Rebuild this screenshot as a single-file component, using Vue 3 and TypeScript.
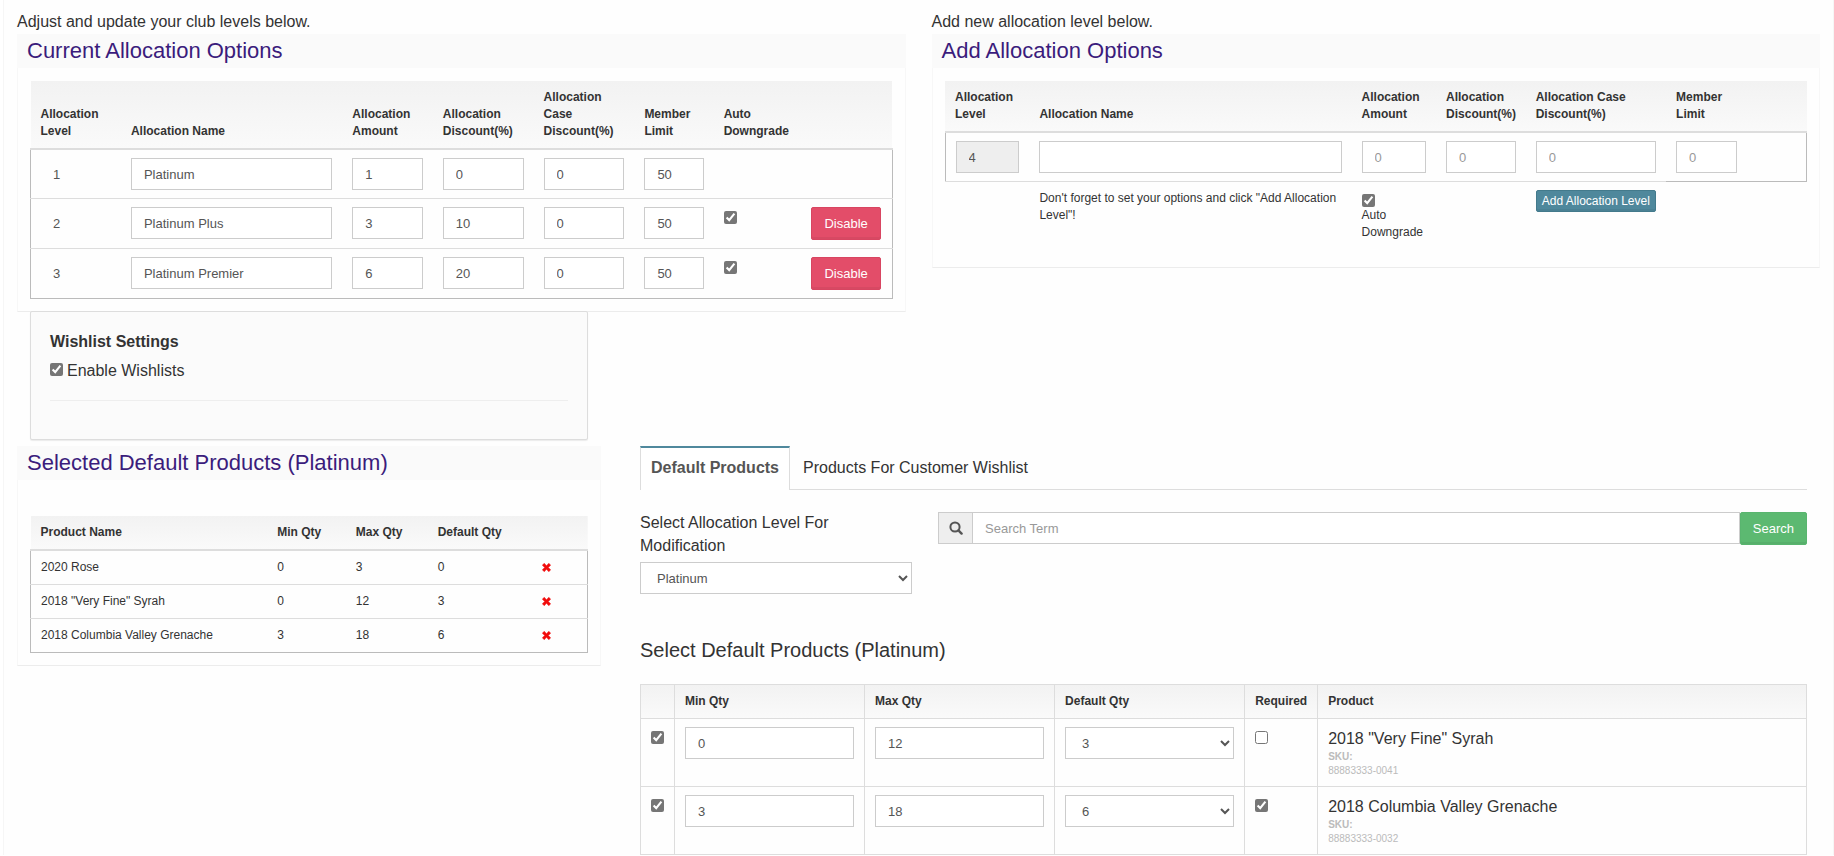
<script setup lang="ts">
import { ref } from 'vue'

interface Level {
  id: number
  name: string
  amount: number
  discount: number
  caseDiscount: number
  limit: number
  downgrade: boolean
  removable: boolean
}

interface SelectedProduct {
  name: string
  min: number
  max: number
  def: number
}

interface Product extends SelectedProduct {
  sku: string
  selected: boolean
  required: boolean
}

const levels = ref<Level[]>([
  { id: 1, name: 'Platinum', amount: 1, discount: 0, caseDiscount: 0, limit: 50, downgrade: false, removable: false },
  { id: 2, name: 'Platinum Plus', amount: 3, discount: 10, caseDiscount: 0, limit: 50, downgrade: true, removable: true },
  { id: 3, name: 'Platinum Premier', amount: 6, discount: 20, caseDiscount: 0, limit: 50, downgrade: true, removable: true },
])

const selectedProducts = ref<SelectedProduct[]>([
  { name: '2020 Rose', min: 0, max: 3, def: 0 },
  { name: '2018 "Very Fine" Syrah', min: 0, max: 12, def: 3 },
  { name: '2018 Columbia Valley Grenache', min: 3, max: 18, def: 6 },
])

const products = ref<Product[]>([
  { name: '2018 "Very Fine" Syrah', min: 0, max: 12, def: 3, sku: '88883333-0041', selected: true, required: false },
  { name: '2018 Columbia Valley Grenache', min: 3, max: 18, def: 6, sku: '88883333-0032', selected: true, required: true },
])

const newLevel = ref({ name: '', amount: '', discount: '', caseDiscount: '', limit: '', downgrade: true })
const wishlists = ref(true)
const currentLevel = ref('Platinum')
const search = ref('')
const quantities = Array.from({ length: 19 }, (_, i) => i)
</script>

<template>
  <main class="page">
    <div class="row halves">
      <section>
        <p class="intro">Adjust and update your club levels below.</p>
        <h2 class="panel-title">Current Allocation Options</h2>
        <div class="panel-body">
          <table class="grid levels">
            <colgroup>
              <col class="l-level" /><col class="l-name" /><col class="l-amount" /><col class="l-disc" />
              <col class="l-case" /><col class="l-limit" /><col class="l-auto" /><col class="l-action" />
            </colgroup>
            <thead>
              <tr>
                <th>Allocation Level</th>
                <th>Allocation Name</th>
                <th>Allocation Amount</th>
                <th>Allocation Discount(%)</th>
                <th>Allocation Case Discount(%)</th>
                <th>Member Limit</th>
                <th>Auto Downgrade</th>
                <th></th>
              </tr>
            </thead>
            <tbody>
              <tr v-for="l in levels" :key="l.id">
                <td><span class="level-no">{{ l.id }}</span></td>
                <td><input v-model="l.name" class="field" type="text" aria-label="Allocation Name" /></td>
                <td><input v-model="l.amount" class="field" type="text" aria-label="Allocation Amount" /></td>
                <td><input v-model="l.discount" class="field" type="text" aria-label="Allocation Discount" /></td>
                <td><input v-model="l.caseDiscount" class="field" type="text" aria-label="Allocation Case Discount" /></td>
                <td><input v-model="l.limit" class="field" type="text" aria-label="Member Limit" /></td>
                <td><input v-if="l.removable" v-model="l.downgrade" class="check" type="checkbox" aria-label="Auto Downgrade" /></td>
                <td><button v-if="l.removable" type="button" class="btn danger">Disable</button></td>
              </tr>
            </tbody>
          </table>
        </div>
      </section>

      <section>
        <p class="intro">Add new allocation level below.</p>
        <h2 class="panel-title">Add Allocation Options</h2>
        <div class="panel-body roomy-bottom">
          <table class="grid">
            <colgroup>
              <col class="a-level" /><col class="a-name" /><col class="a-amount" /><col class="a-disc" />
              <col class="a-case" /><col class="a-limit" /><col />
            </colgroup>
            <thead>
              <tr>
                <th>Allocation Level</th>
                <th>Allocation Name</th>
                <th>Allocation Amount</th>
                <th>Allocation Discount(%)</th>
                <th>Allocation Case Discount(%)</th>
                <th>Member Limit</th>
                <th></th>
              </tr>
            </thead>
            <tbody>
              <tr>
                <td><input class="field" type="text" value="4" readonly aria-label="Allocation Level" /></td>
                <td><input v-model="newLevel.name" class="field" type="text" aria-label="New Allocation Name" /></td>
                <td><input v-model="newLevel.amount" class="field" type="text" placeholder="0" aria-label="New Allocation Amount" /></td>
                <td><input v-model="newLevel.discount" class="field" type="text" placeholder="0" aria-label="New Allocation Discount" /></td>
                <td><input v-model="newLevel.caseDiscount" class="field" type="text" placeholder="0" aria-label="New Allocation Case Discount" /></td>
                <td><input v-model="newLevel.limit" class="field" type="text" placeholder="0" aria-label="New Member Limit" /></td>
                <td></td>
              </tr>
            </tbody>
            <tfoot>
              <tr>
                <td></td>
                <td>Don't forget to set your options and click "Add Allocation Level"!</td>
                <td>
                  <label><input v-model="newLevel.downgrade" class="check" type="checkbox" />Auto Downgrade</label>
                </td>
                <td></td>
                <td><button type="button" class="btn primary small">Add Allocation Level</button></td>
              </tr>
            </tfoot>
          </table>
        </div>
      </section>
    </div>

    <div class="row thirds settings-row">
      <section class="well">
        <h3 class="well-title">Wishlist Settings</h3>
        <label class="check-line"><input v-model="wishlists" class="check" type="checkbox" />Enable Wishlists</label>
        <hr class="rule" />
      </section>
    </div>

    <div class="row thirds">
      <section>
        <h2 class="panel-title">Selected Default Products (Platinum)</h2>
        <div class="panel-body roomy-top">
          <table class="grid">
            <colgroup>
              <col class="s-name" /><col class="s-min" /><col class="s-max" /><col class="s-def" /><col />
            </colgroup>
            <thead>
              <tr>
                <th>Product Name</th>
                <th>Min Qty</th>
                <th>Max Qty</th>
                <th>Default Qty</th>
                <th></th>
              </tr>
            </thead>
            <tbody>
              <tr v-for="p in selectedProducts" :key="p.name">
                <td>{{ p.name }}</td>
                <td>{{ p.min }}</td>
                <td>{{ p.max }}</td>
                <td>{{ p.def }}</td>
                <td>
                  <button type="button" class="remove" :aria-label="`Remove ${p.name}`">
                    <svg viewBox="0 0 10 10" width="9" height="9" aria-hidden="true">
                      <path d="M2.4 0.4 5 3 7.6 0.4 9.6 2.4 7 5 9.6 7.6 7.6 9.6 5 7 2.4 9.6 0.4 7.6 3 5 0.4 2.4Z" stroke-linejoin="round" stroke-width="0.6" stroke="#f10d0d" fill="#f10d0d" />
                    </svg>
                  </button>
                </td>
              </tr>
            </tbody>
          </table>
        </div>
      </section>

      <section class="products">
        <nav class="tabs">
          <a href="#default" class="tab active">Default Products</a>
          <a href="#wishlist" class="tab">Products For Customer Wishlist</a>
        </nav>

        <div class="filters">
          <div>
            <label class="filter-label" for="level">Select Allocation Level For Modification</label>
            <select id="level" v-model="currentLevel" class="field">
              <option v-for="l in levels" :key="l.id">{{ l.name }}</option>
            </select>
          </div>
          <form class="search" @submit.prevent>
            <span class="addon">
              <svg viewBox="0 0 14 14" width="14" height="14" aria-hidden="true">
                <circle cx="6" cy="6" r="4.6" fill="none" stroke="#555" stroke-width="2" />
                <path d="M9.4 9.4 12.6 12.6" stroke="#555" stroke-width="2.4" stroke-linecap="round" />
              </svg>
            </span>
            <input v-model="search" class="field" type="text" placeholder="Search Term" aria-label="Search Term" />
            <button type="submit" class="btn success">Search</button>
          </form>
        </div>

        <h2 class="sub-title">Select Default Products (Platinum)</h2>

        <table class="grid bordered">
          <colgroup>
            <col class="p-check" /><col class="p-qty" /><col class="p-qty" /><col class="p-qty" />
            <col class="p-req" /><col />
          </colgroup>
          <thead>
            <tr>
              <th></th>
              <th>Min Qty</th>
              <th>Max Qty</th>
              <th>Default Qty</th>
              <th>Required</th>
              <th>Product</th>
            </tr>
          </thead>
          <tbody>
            <tr v-for="p in products" :key="p.sku">
              <td><input v-model="p.selected" class="check" type="checkbox" :aria-label="`Select ${p.name}`" /></td>
              <td><input v-model="p.min" class="field" type="text" aria-label="Min Qty" /></td>
              <td><input v-model="p.max" class="field" type="text" aria-label="Max Qty" /></td>
              <td>
                <select v-model="p.def" class="field" aria-label="Default Qty">
                  <option v-for="q in quantities" :key="q" :value="q">{{ q }}</option>
                </select>
              </td>
              <td><input v-model="p.required" class="check" type="checkbox" aria-label="Required" /></td>
              <td>
                <div class="product-name">{{ p.name }}</div>
                <div class="sku"><b>SKU:</b></div>
                <div class="sku">{{ p.sku }}</div>
              </td>
            </tr>
          </tbody>
        </table>
      </section>
    </div>
  </main>
</template>

<style>
body {
  margin: 0;
  background: #fff;
}
</style>

<style scoped>
*,
*::before,
*::after {
  box-sizing: border-box;
}

.page {
  margin-left: 3px;
  padding: 10px 13px 0;
  border: solid #f6f6f6;
  border-width: 0 1px;
  background: #fefefe;
  color: #333;
  font: 16px/23px "Liberation Sans", Arial, sans-serif;
}

.row {
  display: grid;
  column-gap: 26px;
  align-items: start;
}

.halves {
  grid-template-columns: repeat(2, minmax(0, 1fr));
}

.thirds {
  grid-template-columns: minmax(0, 584fr) minmax(0, 1193fr);
}

.intro {
  margin: 0;
  padding-bottom: 1px;
}

.panel-title {
  margin: 0;
  padding: 0 10px;
  background: #fafafa;
  color: #3b1c7c;
  font-size: 22px;
  font-weight: 400;
  line-height: 34px;
}

.panel-body {
  padding: 13px 12px 12px;
  border: 1px solid #f7f7f7;
  border-top: 0;
  border-bottom-color: #ececec;
}

.roomy-bottom {
  padding-bottom: 18px;
}

.roomy-top {
  padding-top: 36px;
}

.grid {
  width: 100%;
  table-layout: fixed;
  border-collapse: collapse;
  font-size: 12px;
  line-height: 17px;
}

.grid th,
.grid td {
  padding: 8px 10px;
  text-align: left;
}

.grid th {
  vertical-align: bottom;
  border-bottom: 2px solid #ddd;
  font-weight: 700;
}

.grid thead tr {
  background: linear-gradient(#f2f2f2, #fafafa);
}

.grid td {
  vertical-align: top;
  border-top: 1px solid #ddd;
}

.grid tbody {
  border: 1px solid #bbb;
}

.grid.bordered th,
.grid.bordered td {
  border: 1px solid #ddd;
}

.grid.bordered tbody {
  border: 0;
}

.l-level,
.l-amount {
  width: 10.5%;
}

.l-name {
  width: 25.7%;
}

.l-disc,
.l-case {
  width: 11.7%;
}

.l-limit {
  width: 9.2%;
}

.l-auto {
  width: 10.2%;
}

.l-action {
  width: 10.5%;
}

.a-level,
.a-amount {
  width: 9.8%;
}

.a-name {
  width: 37.4%;
}

.a-disc {
  width: 10.4%;
}

.a-case {
  width: 16.3%;
}

.a-limit {
  width: 9.4%;
}

.s-name {
  width: 42.5%;
}

.s-min {
  width: 14.1%;
}

.s-max {
  width: 14.7%;
}

.s-def {
  width: 18.7%;
}

.p-check {
  width: 34px;
}

.p-qty {
  width: 16.3%;
}

.p-req {
  width: 73px;
}

.field {
  display: block;
  width: 100%;
  height: 32px;
  margin: 0;
  padding: 6px 12px;
  border: 1px solid #ccc;
  border-radius: 0;
  background: #fff;
  color: #555;
  font: 13px/18px "Liberation Sans", Arial, sans-serif;
}

.field::placeholder {
  color: #999;
}

.field[readonly] {
  background: #eee;
}

.level-no {
  display: block;
  padding: 8px 12px 6px;
  color: #555;
  font-size: 13px;
  line-height: 18px;
}

.check {
  display: block;
  width: 13px;
  height: 13px;
  margin: 4px 0 0;
  accent-color: #767676;
}

.btn {
  padding: 0 12px;
  height: 33px;
  border: 1px solid;
  border-radius: 2px;
  box-shadow: inset 0 -2px 0 rgba(0, 0, 0, 0.05);
  color: #fff;
  font: 13px/18px "Liberation Sans", Arial, sans-serif;
  white-space: nowrap;
}

.danger {
  border-color: #d84561;
  background: #e34d69;
}

.primary {
  border-color: #437a8c;
  background: #4f889c;
}

.success {
  border-color: #59b56f;
  background: #5cb971;
}

.small {
  display: block;
  width: 100%;
  height: 22px;
  padding: 0 5px;
  font-size: 12px;
}

.well {
  min-height: 129px;
  margin: -1px 13px 0;
  padding: 18px 19px;
  border: 1px solid #ddd;
  border-radius: 2px;
  box-shadow: 0 1px 1px #ececec;
  background: #fbfbfb;
}

.settings-row {
  padding-bottom: 6px;
}

.well-title {
  margin: 0 0 6px;
  font-size: 16px;
  font-weight: 700;
}

.check-line {
  display: flex;
  gap: 4px;
}

.rule {
  margin: 18px 0 0;
  border: 0;
  border-top: 1px solid #eee;
}

.remove {
  display: block;
  height: 17px;
  padding: 0;
  border: 0;
  background: none;
  line-height: 0;
}

.products {
  padding: 0 13px;
}

.tabs {
  display: flex;
  align-items: flex-end;
  gap: 2px;
  border-bottom: 1px solid #ddd;
}

.tab {
  padding: 8px 10px 10px;
  border: 1px solid transparent;
  border-top-width: 2px;
  border-bottom: 0;
  color: #333;
  text-decoration: none;
}

.active {
  margin-bottom: -1px;
  padding-bottom: 11px;
  border-color: #4f889c #ddd;
  background: #fff;
  color: #555;
  font-weight: 700;
}

.filters {
  display: grid;
  grid-template-columns: minmax(0, 272fr) minmax(0, 869fr);
  column-gap: 26px;
  align-items: start;
  padding-top: 21px;
}

.filter-label {
  display: block;
  padding-bottom: 5px;
}

.search {
  display: flex;
  align-items: flex-start;
  padding-top: 1px;
}

.search .field {
  flex: 1;
  min-width: 0;
}

.addon {
  display: flex;
  flex: none;
  align-items: center;
  justify-content: center;
  width: 34px;
  height: 32px;
  border: 1px solid #ccc;
  border-right: 0;
  background: #eee;
}

.sub-title {
  margin: 40px 0 18px;
  font-size: 20px;
  font-weight: 400;
  line-height: 32px;
}

.product-name {
  font-size: 16px;
  line-height: 23px;
}

.sku {
  color: #bbb;
  font-size: 10px;
  line-height: 14px;
}
</style>
